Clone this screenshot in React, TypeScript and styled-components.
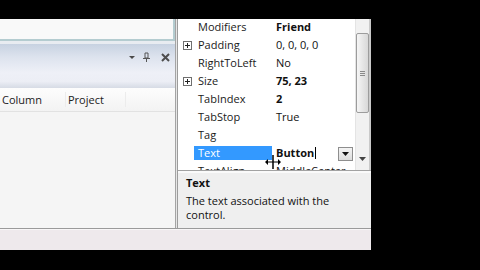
import React from 'react';
import styled, { createGlobalStyle } from 'styled-components';

const GlobalStyle = createGlobalStyle`
  html, body { margin: 0; padding: 0; background: #000; }
  * { box-sizing: border-box; }
`;

const Screen = styled.div`
  width: 480px;
  height: 270px;
  background: #000;
  padding-top: 19px;
  overflow: hidden;
  font-family: "Open Sans", "Noto Sans", sans-serif;
  font-size: 11px;
  color: #111;
`;

const Window = styled.div`
  width: 371px;
  height: 231px;
  display: flex;
  flex-direction: column;
  background: #f0f0f0;
`;

const Workspace = styled.div`
  height: 210px;
  display: flex;
  border-bottom: 1px solid #9a9a9a;
`;

const StatusBand = styled.div`
  flex: 1;
  background: #eee9ec;
  border-top: 1px solid #f8f6f7;
`;

/* ---------- left side: task list tool window ---------- */

const LeftPanel = styled.div`
  width: 176px;
  display: flex;
  flex-direction: column;
  border-right: 1px solid #a4a4a4;
  background: #e8ecf1;
`;

const TopBox = styled.div`
  height: 22px;
  width: 175px;
  background: #f9f9f9;
  border-bottom: 2px solid #b4ccd0;
  border-right: 2px solid #b4ccd0;
`;

const Spacer = styled.div`
  height: 3px;
`;

const TitleBar = styled.div`
  height: 44px;
  display: flex;
  justify-content: flex-end;
  align-items: flex-start;
  padding: 8px 3px 0 0;
  background: linear-gradient(#c7d2e1 0%, #dde3ee 30%, #eef0f7 65%, #eceef5 85%, #d6dbe5 100%);
`;

const IconButton = styled.div<{ $gap?: number }>`
  width: 14px;
  height: 10px;
  margin-left: ${p => p.$gap ?? 0}px;
  display: flex;
  align-items: center;
  justify-content: center;
`;

const ColumnHeader = styled.div`
  height: 24px;
  display: flex;
  align-items: center;
  background: linear-gradient(#fdfdfd, #f3f3f3);
  border-bottom: 1px solid #e2e2e2;
`;

const HeaderCell = styled.div<{ $w: number }>`
  width: ${p => p.$w}px;
  padding-left: 2px;
  color: #222;
  border-right: 1px solid #ececec;
`;

const ListArea = styled.div`
  flex: 1;
  background: #f5f5f5;
`;

const Divider = styled.div`
  width: 1px;
  background: #e6e6e6;
`;

/* ---------- right side: property grid ---------- */

const PropPanel = styled.div`
  flex: 1;
  display: flex;
  flex-direction: column;
  border-left: 1px solid #9c9c9c;
  position: relative;
`;

const GridArea = styled.div`
  height: 151px;
  display: flex;
  background: #fff;
  overflow: hidden;
`;

const Rows = styled.div`
  width: 177px;
  display: flex;
  flex-direction: column;
`;

const Row = styled.div`
  height: 18px;
  flex-shrink: 0;
  display: grid;
  grid-template-columns: 16px 78px 83px;
`;

const Margin = styled.div`
  padding: 4px 0 0 5px;
`;

const Expander = styled.div`
  width: 9px;
  height: 9px;
  border: 1px solid #6f6f6f;
  position: relative;
  &::before, &::after {
    content: "";
    position: absolute;
    background: #222;
  }
  &::before { left: 1px; top: 3px; width: 5px; height: 1px; }
  &::after { left: 3px; top: 1px; width: 1px; height: 5px; }
`;

const NameCell = styled.div<{ $selected?: boolean }>`
  margin-top: 1px;
  height: 14px;
  line-height: 14px;
  padding-left: 4px;
  white-space: nowrap;
  overflow: hidden;
  background: ${p => (p.$selected ? '#3399ff' : 'transparent')};
  color: ${p => (p.$selected ? '#fff' : '#1a1a1a')};
`;

const ValueCell = styled.div<{ $bold?: boolean }>`
  margin-top: 1px;
  height: 14px;
  line-height: 14px;
  padding-left: 4px;
  display: flex;
  align-items: center;
  white-space: nowrap;
  font-weight: ${p => (p.$bold ? 700 : 400)};
`;

const Caret = styled.span`
  width: 1px;
  height: 12px;
  background: #000;
  margin-left: 1px;
`;

const DropButton = styled.div`
  margin-left: auto;
  margin-right: 2px;
  margin-top: 2px;
  width: 15px;
  height: 14px;
  border: 1px solid #8e8e8e;
  background: linear-gradient(#f4f4f4, #dcdcdc);
  display: flex;
  align-items: center;
  justify-content: center;
`;

const ScrollBar = styled.div`
  width: 14px;
  display: flex;
  flex-direction: column;
  align-items: center;
  background: #f1f1f1;
  border-left: 1px solid #e4e4e4;
  padding-top: 14px;
`;

const Thumb = styled.div`
  width: 13px;
  height: 80px;
  border: 1px solid #9c9c9c;
  border-radius: 2px;
  background: linear-gradient(90deg, #f6f6f6, #e6e6e6 50%, #d8d8d8);
  display: flex;
  flex-direction: column;
  align-items: center;
  justify-content: center;
  gap: 1px;
`;

const Grip = styled.div`
  width: 5px;
  height: 1px;
  background: #8a8a8a;
`;

const ScrollArrow = styled.div`
  margin-top: auto;
  margin-bottom: 6px;
`;

const RightEdge = styled.div`
  width: 2px;
  background: #c9c9c9;
`;

const Splitter = styled.div`
  height: 3px;
  border-top: 1px solid #a2a2a2;
  background: #fafafa;
`;

const Description = styled.div`
  flex: 1;
  background: #efefef;
  padding: 2px 8px 0 8px;
`;

const DescTitle = styled.div`
  font-weight: 700;
  line-height: 16px;
  margin-bottom: 3px;
`;

const DescText = styled.div`
  line-height: 14px;
  width: 150px;
`;

const Cursor = styled.svg`
  position: absolute;
  left: 87px;
  top: 136px;
`;

interface Prop {
  name: string;
  value: string;
  bold?: boolean;
  expandable?: boolean;
  selected?: boolean;
}

const props: Prop[] = [
  { name: 'Modifiers', value: 'Friend', bold: true },
  { name: 'Padding', value: '0, 0, 0, 0', expandable: true },
  { name: 'RightToLeft', value: 'No' },
  { name: 'Size', value: '75, 23', bold: true, expandable: true },
  { name: 'TabIndex', value: '2', bold: true },
  { name: 'TabStop', value: 'True' },
  { name: 'Tag', value: '' },
  { name: 'Text', value: 'Button', bold: true, selected: true },
  { name: 'TextAlign', value: 'MiddleCenter' },
];

const App: React.FC = () => {
  return (
    <>
      <GlobalStyle />
      <Screen>
        <Window>
          <Workspace>
            <LeftPanel>
              <TopBox />
              <Spacer />
              <TitleBar>
                <IconButton>
                  <svg width="8" height="6" viewBox="0 0 8 6">
                    <path d="M1 2 L7 2 L4 5 Z" fill="#4a4a4a" />
                  </svg>
                </IconButton>
                <IconButton>
                  <svg width="9" height="10" viewBox="0 0 9 10">
                    <path d="M3 1 H6 V6 H3 Z" fill="none" stroke="#555" strokeWidth="1" />
                    <path d="M1 6.5 H8 M4.5 6.5 V10" stroke="#555" strokeWidth="1" />
                  </svg>
                </IconButton>
                <IconButton $gap={5}>
                  <svg width="9" height="9" viewBox="0 0 9 9">
                    <path d="M1 1 L8 8 M8 1 L1 8" stroke="#4d4d4d" strokeWidth="2" />
                  </svg>
                </IconButton>
              </TitleBar>
              <ColumnHeader>
                <HeaderCell $w={66}>Column</HeaderCell>
                <HeaderCell $w={60}>Project</HeaderCell>
              </ColumnHeader>
              <ListArea />
            </LeftPanel>
            <Divider />
            <PropPanel>
              <GridArea>
                <Rows>
                  {props.map(p => (
                    <Row key={p.name}>
                      <Margin>{p.expandable && <Expander />}</Margin>
                      <NameCell $selected={p.selected}>{p.name}</NameCell>
                      <ValueCell $bold={p.bold}>
                        {p.value}
                        {p.selected && <Caret />}
                        {p.selected && (
                          <DropButton>
                            <svg width="7" height="4" viewBox="0 0 7 4">
                              <path d="M0 0 H7 L3.5 4 Z" fill="#111" />
                            </svg>
                          </DropButton>
                        )}
                      </ValueCell>
                    </Row>
                  ))}
                </Rows>
                <ScrollBar>
                  <Thumb>
                    <Grip />
                    <Grip />
                    <Grip />
                  </Thumb>
                  <ScrollArrow>
                    <svg width="7" height="4" viewBox="0 0 7 4">
                      <path d="M0 0 H7 L3.5 4 Z" fill="#444" />
                    </svg>
                  </ScrollArrow>
                </ScrollBar>
                <RightEdge />
              </GridArea>
              <Splitter />
              <Description>
                <DescTitle>Text</DescTitle>
                <DescText>The text associated with the control.</DescText>
              </Description>
              <Cursor width="17" height="14" viewBox="0 0 17 14">
                <path d="M8 0 V14" stroke="#000" strokeWidth="1.5" />
                <path d="M1 7 H15" stroke="#000" strokeWidth="1" />
                <path d="M0 7 L3 4 V10 Z M16 7 L13 4 V10 Z" fill="#000" />
              </Cursor>
            </PropPanel>
          </Workspace>
          <StatusBand />
        </Window>
      </Screen>
    </>
  );
};

export default App;
